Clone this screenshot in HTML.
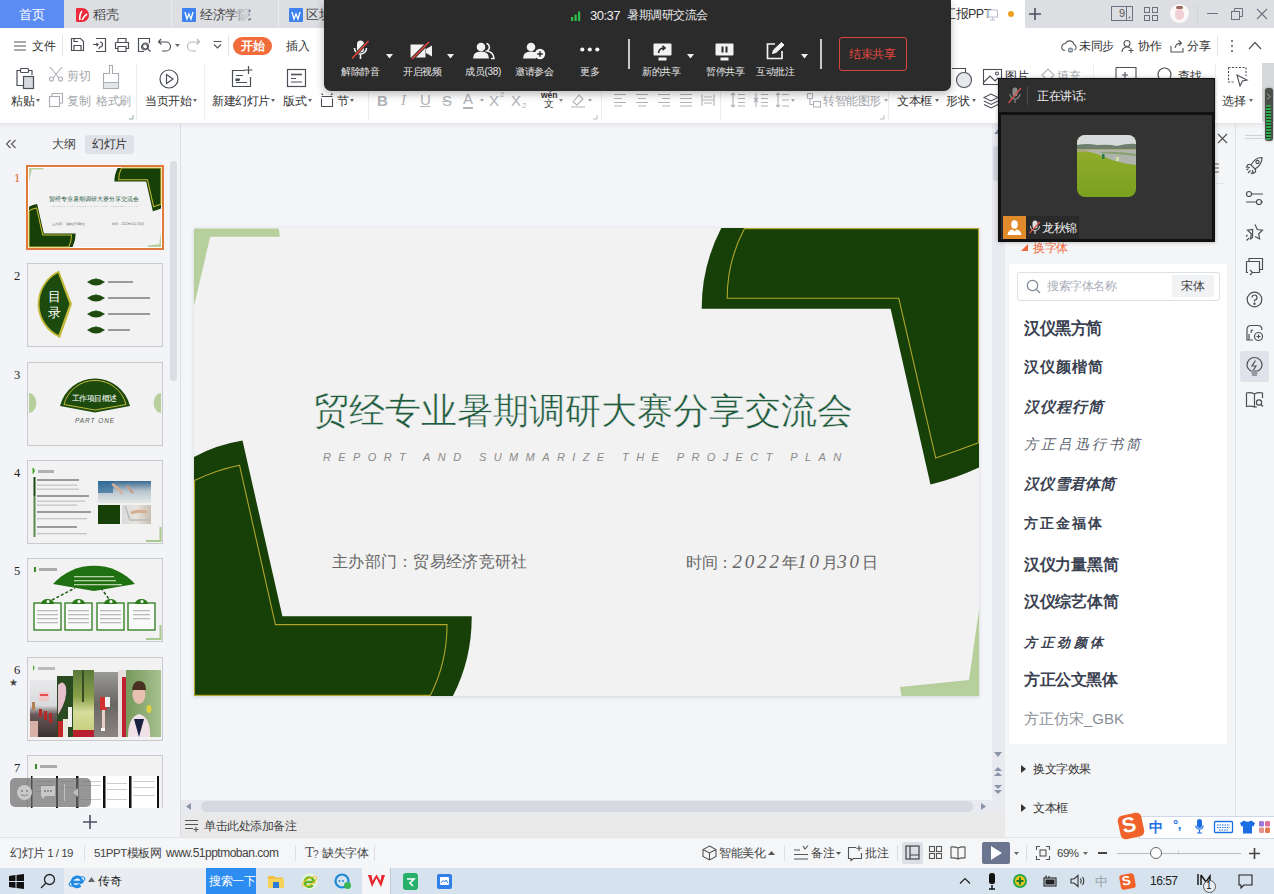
<!DOCTYPE html>
<html><head><meta charset="utf-8">
<style>
*{box-sizing:border-box;margin:0;padding:0}
html,body{width:1274px;height:894px;overflow:hidden;background:#fff;font-family:"Liberation Sans",sans-serif;color:#333}
.a{position:absolute}
.t{position:absolute;white-space:nowrap;font-size:12px;line-height:14px;color:#3a3a3a;letter-spacing:-0.5px}
svg{position:absolute;overflow:visible}
</style></head><body>

<!-- ===== TAB BAR ===== -->
<div class="a" style="left:0;top:0;width:1274px;height:28px;background:#dcdee2"></div>
<div class="a" style="left:0;top:0;width:64px;height:28px;background:#5b8cf4"></div>
<div class="t" style="left:19px;top:7px;font-size:13px;line-height:15px;color:#fff">首页</div>
<div class="a" style="left:171px;top:0;width:1px;height:28px;background:#e9eaed"></div>
<div class="a" style="left:278px;top:0;width:1px;height:28px;background:#e9eaed"></div>
<!-- daoke icon -->
<div class="a" style="left:76px;top:8px;width:13px;height:14px;background:#ee2b3b;border-radius:1px 7px 7px 1px"></div>
<svg style="left:76px;top:8px" width="13" height="14"><path d="M4,12 Q3,7 6,3 M6,12 Q8,8 11,6" stroke="#fff" stroke-width="1.6" fill="none"/></svg>
<div class="t" style="left:93px;top:7px;font-size:13px;line-height:15px;color:#444">稻壳</div>
<!-- W icons -->
<div class="a" style="left:182px;top:8px;width:14px;height:14px;background:#3d82ef;border-radius:1px"></div>
<svg style="left:182px;top:8px" width="14" height="14"><path d="M3,4 L5,11 L7,6 L9,11 L11,4" stroke="#fff" stroke-width="1.3" fill="none"/></svg>
<div class="t" style="left:200px;top:7px;font-size:13px;line-height:15px;color:#444">经济学院</div>
<div class="a" style="left:232px;top:0;width:16px;height:28px;background:linear-gradient(90deg,rgba(220,222,226,0),#dcdee2)"></div>
<svg style="left:236px;top:9px" width="14" height="12"><rect x="1" y="1" width="11" height="7" stroke="#c5cad3" fill="none"/><path d="M6.5,8 V11 M4,11 H9" stroke="#c5cad3"/></svg>
<div class="a" style="left:289px;top:8px;width:14px;height:14px;background:#3d82ef;border-radius:1px"></div>
<svg style="left:289px;top:8px" width="14" height="14"><path d="M3,4 L5,11 L7,6 L9,11 L11,4" stroke="#fff" stroke-width="1.3" fill="none"/></svg>
<div class="t" style="left:306px;top:7px;font-size:13px;line-height:15px;color:#444">区块链</div>
<!-- active tab -->
<div class="a" style="left:940px;top:0;width:85px;height:28px;background:#fff"></div>
<div class="t" style="left:943px;top:7px;font-size:12.5px;line-height:15px;color:#333">汇报PPT</div>
<svg style="left:987px;top:9px" width="13" height="12"><rect x="0.5" y="1" width="10" height="7" stroke="#b8c0cc" fill="none"/><path d="M5.5,8 V11 M3,11 H8" stroke="#b8c0cc"/></svg>
<div class="a" style="left:1008px;top:11px;width:6px;height:6px;border-radius:50%;background:#f0a020"></div>
<svg style="left:1028px;top:7px" width="14" height="14"><path d="M7,1 V13 M1,7 H13" stroke="#4a5060" stroke-width="1.6"/></svg>
<!-- right tab bar icons -->
<svg style="left:1111px;top:6px" width="23" height="16"><rect x="0.5" y="0.5" width="21" height="14" stroke="#6b7280" fill="none"/><path d="M15.5,1 V15" stroke="#6b7280"/><circle cx="18.5" cy="11.5" r="0.9" fill="#6b7280"/></svg>
<div class="t" style="left:1119px;top:6px;font-size:11px;color:#555">9</div>
<svg style="left:1144px;top:7px" width="14" height="14"><rect x="0.5" y="0.5" width="5" height="5" stroke="#6b7280" fill="none"/><rect x="8.5" y="0.5" width="5" height="5" stroke="#6b7280" fill="none"/><rect x="0.5" y="8.5" width="5" height="5" stroke="#6b7280" fill="none"/><rect x="8.5" y="8.5" width="5" height="5" stroke="#6b7280" fill="none"/></svg>
<div class="a" style="left:1170px;top:4px;width:19px;height:19px;border-radius:50%;background:#fbf8f8"></div>
<div class="a" style="left:1175px;top:9px;width:9px;height:11px;border-radius:45%;background:#f0d0d4"></div>
<div class="a" style="left:1176px;top:6px;width:7px;height:3px;background:#9a6a5a;border-radius:2px"></div>
<div class="a" style="left:1197px;top:5px;width:1px;height:18px;background:#cfd2d8"></div>
<div class="a" style="left:1207px;top:13px;width:11px;height:1px;background:#6b7280"></div>
<svg style="left:1231px;top:8px" width="12" height="12"><rect x="0.5" y="3.5" width="8" height="8" stroke="#6b7280" fill="none"/><path d="M3.5,3.5 V0.5 H11.5 V8.5 H8.5" stroke="#6b7280" fill="none"/></svg>
<svg style="left:1256px;top:8px" width="12" height="12"><path d="M1,1 L11,11 M11,1 L1,11" stroke="#6b7280" stroke-width="1.1"/></svg>

<!-- ===== MENU ROW ===== -->
<div class="a" style="left:0;top:28px;width:1274px;height:32px;background:#fff"></div>
<svg style="left:14px;top:41px" width="13" height="10"><path d="M0,1 H12 M0,5 H12 M0,9 H12" stroke="#555" stroke-width="1.2"/></svg>
<div class="t" style="left:32px;top:39px;font-size:11.5px;color:#333">文件</div>
<div class="a" style="left:62px;top:35px;width:1px;height:21px;background:#e3e4e8"></div>
<svg style="left:70px;top:37px" width="16" height="16" fill="none" stroke="#4b4f58" stroke-width="1.2"><path d="M1.5,1.5 H10.5 L13.5,4.5 V13.5 H1.5 Z M4,13.5 V8.5 H11 V13.5 M4,1.5 V4.5 H8"/></svg>
<svg style="left:92px;top:37px" width="16" height="16" fill="none" stroke="#4b4f58" stroke-width="1.2"><path d="M4,1.5 H13.5 V14.5 H4 M1,7.5 H6 M4.5,6 L6,7.5 L4.5,9 M8,5 A2.5,2.5 0 1 1 8,10 L6.5,12"/></svg>
<svg style="left:114px;top:37px" width="16" height="16" fill="none" stroke="#4b4f58" stroke-width="1.2"><path d="M4,5 V1.5 H12 V5 M1.5,5.5 H14.5 V11.5 H12 M4,11.5 H1.5 V5.5 M4,9.5 H12 V14.5 H4 Z"/></svg>
<svg style="left:137px;top:37px" width="16" height="16" fill="none" stroke="#4b4f58" stroke-width="1.2"><path d="M12.5,6 V1.5 H1.5 V14.5 H7 M7.5,7 A3,3 0 1 0 7.6,7 M10.5,11.5 L13.5,14.5"/><circle cx="8.5" cy="9" r="3"/></svg>
<svg style="left:157px;top:37px" width="16" height="16" fill="none" stroke="#4b4f58" stroke-width="1.2"><path d="M4,2 L1.5,5 L4.5,7.5 M1.5,5 H9 A4.5,4.5 0 0 1 9,14 H5"/></svg>
<svg style="left:175px;top:44px" width="6" height="4"><path d="M0,0 H5 L2.5,3 Z" fill="#666"/></svg>
<svg style="left:186px;top:37px" width="16" height="16" fill="none" stroke="#b4b7bd" stroke-width="1.2"><path d="M11,2 L13.5,5 L10.5,7.5 M13.5,5 H6 A4.5,4.5 0 0 0 6,14 H10"/></svg>
<svg style="left:213px;top:41px" width="9" height="9" fill="none" stroke="#555" stroke-width="1.1"><path d="M0.5,0.5 H8.5 M1,3.5 L4.5,7 L8,3.5"/></svg>
<div class="a" style="left:228px;top:35px;width:1px;height:21px;background:#e3e4e8"></div>
<div class="a" style="left:233px;top:37px;width:39px;height:18px;border-radius:9px;background:#f26b3a"></div>
<div class="t" style="left:241px;top:39px;font-size:12px;color:#fff;font-weight:bold;letter-spacing:-0.3px">开始</div>
<div class="t" style="left:286px;top:39px;font-size:11.5px;color:#333">插入</div>
<!-- menu row right -->
<svg style="left:1061px;top:39px" width="16" height="14" fill="none" stroke="#555" stroke-width="1.1"><path d="M4,11.5 A3.5,3.5 0 0 1 4.5,4.5 A4.5,4.5 0 0 1 13,5.5 A3,3 0 0 1 13.5,11"/><circle cx="9.5" cy="11" r="2.6" fill="#7c8592" stroke="none"/><path d="M8.2,11 H10.8" stroke="#fff"/></svg>
<div class="t" style="left:1079px;top:39px;font-size:11.5px;color:#333">未同步</div>
<svg style="left:1121px;top:39px" width="14" height="14" fill="none" stroke="#555" stroke-width="1.1"><circle cx="6" cy="4.5" r="3"/><path d="M1,13 A5,5 0 0 1 9,9 M10,9 V14 M7.5,11.5 H12.5"/></svg>
<div class="t" style="left:1138px;top:39px;font-size:11.5px;color:#333">协作</div>
<svg style="left:1170px;top:39px" width="14" height="14" fill="none" stroke="#555" stroke-width="1.1"><path d="M1,7 V13 H13 V9 M5,9 Q6,4 11,4 M8.5,1.5 L11.5,4 L9,6.5"/></svg>
<div class="t" style="left:1187px;top:39px;font-size:11.5px;color:#333">分享</div>
<div class="a" style="left:1217px;top:36px;width:1px;height:20px;background:#e3e4e8"></div>
<svg style="left:1230px;top:39px" width="4" height="14"><circle cx="2" cy="2" r="1" fill="#555"/><circle cx="2" cy="7" r="1" fill="#555"/><circle cx="2" cy="12" r="1" fill="#555"/></svg>
<svg style="left:1248px;top:41px" width="14" height="9" fill="none" stroke="#555" stroke-width="1.2"><path d="M1,8 L7,1.5 L13,8"/></svg>

<!-- ===== RIBBON ===== -->
<div class="a" style="left:0;top:60px;width:1274px;height:64px;background:#fff;border-bottom:1px solid #e3e4e8"></div>
<!-- ribbon content -->
<svg style="left:15px;top:66px" width="22" height="24" fill="none" stroke="#4b4f58" stroke-width="1.2"><path d="M5,4.5 H2 V19.5 H8 M14,4.5 H17 V9"/><rect x="5.5" y="2.5" width="8" height="4" rx="1"/><rect x="8.5" y="10.5" width="10" height="12" fill="#d6d9de" stroke="#4b4f58"/></svg>
<div class="t" style="left:11px;top:94px;font-size:11.5px;color:#333">粘贴</div>
<svg style="left:36px;top:99px" width="5" height="3"><path d="M0,0 H4 L2,3 Z" fill="#666"/></svg>
<svg style="left:48px;top:66px" width="16" height="16" fill="none" stroke="#a9adb3" stroke-width="1.1"><path d="M2,1 L11,12 M14,1 L5,12"/><circle cx="3.5" cy="13" r="2"/><circle cx="12.5" cy="13" r="2"/></svg>
<div class="t" style="left:67px;top:69px;font-size:11.5px;color:#a3a6ab">剪切</div>
<svg style="left:48px;top:92px" width="16" height="16" fill="none" stroke="#a9adb3" stroke-width="1.1"><path d="M4,4 V1.5 H14.5 V11 H12"/><rect x="1.5" y="4.5" width="10" height="10"/></svg>
<div class="t" style="left:67px;top:94px;font-size:11.5px;color:#a3a6ab">复制</div>
<svg style="left:102px;top:64px" width="18" height="26" fill="none" stroke="#a9adb3" stroke-width="1.1"><path d="M7.5,1.5 H10.5 V9.5 H16.5 V24.5 H1.5 V9.5 H7.5 Z M1.5,18.5 H16.5"/><rect x="2" y="19" width="14" height="5" fill="#e3e5e8" stroke="none"/></svg>
<div class="t" style="left:96px;top:94px;font-size:11.5px;color:#a3a6ab">格式刷</div>
<svg style="left:129px;top:115px" width="5" height="5"><path d="M4,0 V4 H0" stroke="#9aa" fill="none"/></svg>
<div class="a" style="left:136px;top:64px;width:1px;height:56px;background:#eceef1"></div>
<svg style="left:159px;top:69px" width="20" height="20" fill="none" stroke="#4b4f58" stroke-width="1.2"><circle cx="10" cy="10" r="9"/><path d="M7.5,5.5 L14,10 L7.5,14.5 Z"/></svg>
<div class="t" style="left:145px;top:94px;font-size:11.5px;color:#333">当页开始</div>
<svg style="left:193px;top:99px" width="5" height="3"><path d="M0,0 H4 L2,3 Z" fill="#666"/></svg>
<div class="a" style="left:204px;top:64px;width:1px;height:56px;background:#eceef1"></div>
<svg style="left:231px;top:65px" width="24" height="24" fill="none" stroke="#4b4f58" stroke-width="1.2"><path d="M14,5.5 H1.5 V21.5 H19.5 V12 M17.5,1 V9 M13.5,5 H21.5 M5,10.5 H12 M5,14.5 H9 M5,17.5 H16"/><rect x="5" y="14" width="3" height="1.5" fill="#4b4f58"/></svg>
<div class="t" style="left:212px;top:94px;font-size:11.5px;color:#333">新建幻灯片</div>
<svg style="left:271px;top:99px" width="5" height="3"><path d="M0,0 H4 L2,3 Z" fill="#666"/></svg>
<svg style="left:286px;top:68px" width="21" height="20" fill="none" stroke="#4b4f58" stroke-width="1.2"><rect x="1.5" y="1.5" width="18" height="17"/><path d="M5,6.5 H16 M5,10.5 H10 M5,14 H16"/><rect x="5" y="5" width="11" height="3" fill="#4b4f58" opacity=".3" stroke="none"/></svg>
<div class="t" style="left:283px;top:94px;font-size:11.5px;color:#333">版式</div>
<svg style="left:308px;top:99px" width="5" height="3"><path d="M0,0 H4 L2,3 Z" fill="#666"/></svg>
<svg style="left:320px;top:93px" width="14" height="14" fill="none" stroke="#4b4f58" stroke-width="1.1"><path d="M1.5,3.5 H12.5 M1.5,0.5 L3,2 M12.5,0.5 L11,2 M1.5,5.5 V13.5 H12.5 V5.5"/></svg>
<div class="t" style="left:337px;top:94px;font-size:11.5px;color:#333">节</div>
<svg style="left:350px;top:99px" width="5" height="3"><path d="M0,0 H4 L2,3 Z" fill="#666"/></svg>
<div class="a" style="left:368px;top:64px;width:1px;height:56px;background:#eceef1"></div>
<!-- font formatting row (greyed) -->
<div class="t" style="left:377px;top:92px;font-size:15px;line-height:17px;color:#b0b3b8;font-weight:bold">B</div>
<div class="t" style="left:401px;top:92px;font-size:15px;line-height:17px;color:#b0b3b8;font-style:italic;font-family:'Liberation Serif',serif">I</div>
<div class="t" style="left:420px;top:91px;font-size:15px;line-height:17px;color:#b0b3b8;text-decoration:underline">U</div>
<div class="t" style="left:442px;top:92px;font-size:15px;line-height:17px;color:#b0b3b8;text-decoration:line-through">S</div>
<div class="t" style="left:463px;top:90px;font-size:15px;line-height:17px;color:#b0b3b8;border-bottom:2px solid #b0b3b8">A</div>
<svg style="left:480px;top:99px" width="5" height="3"><path d="M0,0 H4 L2,3 Z" fill="#aaa"/></svg>
<div class="t" style="left:489px;top:92px;font-size:15px;line-height:17px;color:#b0b3b8">X</div><div class="t" style="left:500px;top:90px;font-size:8px;line-height:9px;color:#b0b3b8">2</div>
<div class="t" style="left:511px;top:92px;font-size:15px;line-height:17px;color:#b0b3b8">X</div><div class="t" style="left:522px;top:101px;font-size:8px;line-height:9px;color:#b0b3b8">2</div>
<div class="t" style="left:541px;top:91px;font-size:8.5px;line-height:9px;color:#333;letter-spacing:0;font-weight:bold">wén</div>
<div class="t" style="left:544px;top:99px;font-size:10px;line-height:10px;color:#333;letter-spacing:0">文</div>
<svg style="left:559px;top:99px" width="5" height="3"><path d="M0,0 H4 L2,3 Z" fill="#888"/></svg>
<svg style="left:570px;top:92px" width="16" height="16" fill="none" stroke="#b0b3b8" stroke-width="1.1"><path d="M3,10 L9,3 L13,7 L7,13 Z M1,15 H15"/></svg>
<svg style="left:588px;top:99px" width="5" height="3"><path d="M0,0 H4 L2,3 Z" fill="#aaa"/></svg>
<svg style="left:593px;top:115px" width="5" height="5"><path d="M4,0 V4 H0" stroke="#bbb" fill="none"/></svg>
<div class="a" style="left:601px;top:64px;width:1px;height:56px;background:#eceef1"></div>
<svg style="left:613px;top:93px" width="110" height="14" fill="none" stroke="#b0b3b8" stroke-width="1.1">
<path d="M1,1.5 H13 M1,5.5 H9 M1,9.5 H13 M1,13 H9"/>
<path d="M23,1.5 H35 M25,5.5 H33 M23,9.5 H35 M25,13 H33"/>
<path d="M45,1.5 H57 M49,5.5 H57 M45,9.5 H57 M49,13 H57"/>
<path d="M67,1.5 H79 M67,5.5 H79 M67,9.5 H79 M67,13 H79"/>
<path d="M89,1.5 V13 M101,1.5 V13 M89,7 H101 M91,4 H99 M91,10 H99"/></svg>
<div class="a" style="left:720px;top:64px;width:1px;height:56px;background:#eceef1"></div>
<svg style="left:730px;top:92px" width="60" height="16" fill="none" stroke="#b0b3b8" stroke-width="1.1">
<path d="M3,1 V15 M1,3 L3,1 L5,3 M1,13 L3,15 L5,13 M8,2.5 H15 M8,6.5 H15 M8,10.5 H15 M8,14 H15"/>
<path d="M26,1 V15 M24,6 L26,8 L28,6 M24,10 L26,8 L28,10 M31,2.5 H38 M31,6.5 H38 M31,10.5 H38 M31,14 H38"/>
<path d="M48,1 V15 M46,3 L48,1 L50,3 M46,13 L48,15 L50,13 M52,2.5 H59 M52,8 H59 M52,14 H59"/></svg>
<svg style="left:791px;top:99px" width="5" height="3"><path d="M0,0 H4 L2,3 Z" fill="#aaa"/></svg>
<svg style="left:806px;top:92px" width="16" height="16" fill="none" stroke="#b0b3b8" stroke-width="1.1"><path d="M1.5,1.5 H6.5 V6.5 H1.5 Z M4,6.5 V12.5 H7 M7.5,9.5 H14.5 V15 H7.5 Z"/></svg>
<div class="t" style="left:823px;top:94px;font-size:11.5px;color:#a3a6ab">转智能图形</div>
<svg style="left:884px;top:99px" width="5" height="3"><path d="M0,0 H4 L2,3 Z" fill="#aaa"/></svg>
<svg style="left:880px;top:115px" width="5" height="5"><path d="M4,0 V4 H0" stroke="#bbb" fill="none"/></svg>
<div class="a" style="left:888px;top:64px;width:1px;height:56px;background:#eceef1"></div>
<div class="t" style="left:897px;top:94px;font-size:11.5px;color:#333">文本框</div>
<svg style="left:935px;top:99px" width="5" height="3"><path d="M0,0 H4 L2,3 Z" fill="#666"/></svg>
<div class="t" style="left:946px;top:94px;font-size:11.5px;color:#333">形状</div>
<svg style="left:972px;top:99px" width="5" height="3"><path d="M0,0 H4 L2,3 Z" fill="#666"/></svg>
<svg style="left:951px;top:67px" width="28" height="22" fill="none" stroke="#4b4f58" stroke-width="1.1"><path d="M1,1.5 H14.5 V8"/><circle cx="13" cy="13" r="7.5" fill="#e6e8eb"/></svg>
<svg style="left:983px;top:93px" width="16" height="16" fill="none" stroke="#4b4f58" stroke-width="1.1"><path d="M8,1 L15,4.5 L8,8 L1,4.5 Z M1,8 L8,11.5 L15,8 M1,11.5 L8,15 L15,11.5"/></svg>
<svg style="left:983px;top:69px" width="19" height="17" fill="none" stroke="#4b4f58" stroke-width="1.1"><rect x="0.5" y="0.5" width="18" height="15"/><path d="M1,13 L7,7 L12,12 L15,9 L18,12"/><circle cx="14" cy="4.5" r="1.5"/></svg>
<div class="t" style="left:1005px;top:69px;font-size:11.5px;color:#333">图片</div>
<div class="t" style="left:1057px;top:69px;font-size:11.5px;color:#a3a6ab">填充</div>
<svg style="left:1040px;top:68px" width="16" height="16" fill="none" stroke="#b0b3b8" stroke-width="1.1"><path d="M2,7 L8,1 L14,7 L8,13 Z"/></svg>
<div class="a" style="left:1093px;top:64px;width:1px;height:56px;background:#eceef1"></div>
<svg style="left:1115px;top:66px" width="22" height="20" fill="none" stroke="#4b4f58" stroke-width="1.1"><path d="M1,1.5 H21 V12 M1,1.5 V12"/><path d="M10,6 V12 M7,9 H13"/></svg>
<svg style="left:1157px;top:67px" width="18" height="18" fill="none" stroke="#4b4f58" stroke-width="1.2"><circle cx="7.5" cy="7.5" r="6.5"/><path d="M12,12 L17,17"/></svg>
<div class="t" style="left:1178px;top:69px;font-size:11.5px;color:#333">查找</div>
<div class="a" style="left:1215px;top:64px;width:1px;height:56px;background:#eceef1"></div>
<svg style="left:1227px;top:66px" width="22" height="22" fill="none" stroke="#4b4f58" stroke-width="1.1"><path d="M1.5,1.5 H19 V10 M1.5,1.5 V16 H8" stroke-dasharray="2 1.5"/><path d="M10,9 L20,14 L15.5,15 L13,20 Z" fill="#fff"/></svg>
<div class="t" style="left:1222px;top:94px;font-size:11.5px;color:#333">选择</div>
<svg style="left:1249px;top:99px" width="5" height="3"><path d="M0,0 H4 L2,3 Z" fill="#666"/></svg>

<!-- ===== LEFT PANEL ===== -->
<div class="a" style="left:0;top:124px;width:181px;height:713px;background:#f3f4f7;border-right:1px solid #dcdde2"></div>
<svg style="left:5px;top:139px" width="12" height="10" fill="none" stroke="#555" stroke-width="1.1"><path d="M5.5,1 L1.5,5 L5.5,9 M10.5,1 L6.5,5 L10.5,9"/></svg>
<div class="t" style="left:52px;top:137px;font-size:12px;color:#444">大纲</div>
<div class="a" style="left:85px;top:135px;width:49px;height:19px;border-radius:3px;background:#dfe2e8"></div>
<div class="t" style="left:92px;top:137px;font-size:12px;color:#333">幻灯片</div>
<div class="a" style="left:170px;top:161px;width:7px;height:220px;border-radius:3px;background:#dcdee3"></div>
<!-- numbers -->
<div class="t" style="left:14px;top:171px;font-size:12.5px;color:#e06a2a;font-family:'Liberation Serif',serif">1</div>
<div class="t" style="left:14px;top:269px;font-size:12.5px;color:#222;font-family:'Liberation Serif',serif">2</div>
<div class="t" style="left:14px;top:368px;font-size:12.5px;color:#222;font-family:'Liberation Serif',serif">3</div>
<div class="t" style="left:14px;top:466px;font-size:12.5px;color:#222;font-family:'Liberation Serif',serif">4</div>
<div class="t" style="left:14px;top:564px;font-size:12.5px;color:#222;font-family:'Liberation Serif',serif">5</div>
<div class="t" style="left:14px;top:663px;font-size:12.5px;color:#222;font-family:'Liberation Serif',serif">6</div>
<div class="t" style="left:9px;top:676px;font-size:10px;color:#444">★</div>
<div class="t" style="left:14px;top:761px;font-size:12.5px;color:#222;font-family:'Liberation Serif',serif">7</div>
<!-- thumb 1 -->
<div class="a" style="left:26px;top:165px;width:138px;height:85px;border:2px solid #e07a3a;background:#fff"></div>
<svg style="left:29px;top:168px" width="132" height="79" viewBox="0 0 785 468" preserveAspectRatio="none">
 <rect width="785" height="468" fill="#f2f2f2"/>
 <path d="M0,0.4 L84.7,0.4 L85.9,8.8 L16.2,8.8 L0,78.1 Z" fill="#b6cf9c"/>
 <path d="M785,381.4 L775,451.9 L706,459 L707.5,468 L785,468 Z" fill="#b6cf9c"/>
 <path d="M527.3,0 A174,174 0 0 0 507.7,80.7 L696.6,80.7 L736.5,256.6 Q762,250 785,239.4 L785,0 Z" fill="#173f08"/>
 <path d="M550.5,0.6 A148,148 0 0 0 533.2,70.3 L704.8,70.3 L741.7,230 Q763,223 784.5,214.8 L784.5,0.6 Z" fill="none" stroke="#c8bb30" stroke-width="6"/>
 <path d="M0,229 Q22,217 48.5,212.6 L88.4,388.2 L277.7,388.2 A173,173 0 0 1 258.9,468 L0,468 Z" fill="#173f08"/>
 <path d="M0.5,252.5 Q22,242 45.5,237.2 L81.4,396.6 L253,396.6 A155,155 0 0 1 236.3,467.4 L0.5,467.4 Z" fill="none" stroke="#c8bb30" stroke-width="6"/>
 <text x="120" y="197" font-size="36" fill="#1f5b3d" font-family="Liberation Serif" textLength="537">贸经专业暑期调研大赛分享交流会</text>
 <text x="129" y="232" font-size="11" fill="#8a8a8a" textLength="517" font-style="italic">REPORT AND SUMMARIZE THE PROJECT PLAN</text>
 <text x="138" y="340" font-size="16" fill="#666" textLength="195">主办部门：贸易经济竞研社</text>
 <text x="492" y="340" font-size="16" fill="#666" textLength="192">时间：2022年10月30日</text>
</svg>
<!-- thumb 2 -->
<div class="a" style="left:27px;top:263px;width:136px;height:84px;border:1.5px solid #c9cacd;background:#f2f2f2"></div>
<svg style="left:27px;top:263px" width="136" height="84">
 <path d="M32,7.5 A37,37 0 0 0 33,75 L45,41 Z" fill="#c2b83a"/>
 <path d="M31,10 A35,35 0 0 0 31.5,72 L42.5,41 Z" fill="#1d4b0e"/>
 <text x="21" y="38" font-size="13" fill="#fff" font-family="Liberation Serif">目</text><text x="21" y="54" font-size="13" fill="#fff" font-family="Liberation Serif">录</text>
 <g fill="#1d4b0e"><path d="M60,19 Q69,12 78,19 Q69,26 60,19Z"/><path d="M60,35 Q69,28 78,35 Q69,42 60,35Z"/><path d="M60,51 Q69,44 78,51 Q69,58 60,51Z"/><path d="M60,67 Q69,60 78,67 Q69,74 60,67Z"/></g>
 <g fill="#999"><rect x="81" y="18" width="25" height="2"/><rect x="81" y="34" width="42" height="2"/><rect x="81" y="50" width="42" height="2"/><rect x="81" y="66" width="22" height="2"/></g>
</svg>
<!-- thumb 3 -->
<div class="a" style="left:27px;top:362px;width:136px;height:84px;border:1.5px solid #c9cacd;background:#f2f2f2"></div>
<svg style="left:27px;top:362px" width="136" height="84">
 <path d="M33,44 A36,36 0 0 1 103,44 L68,50.5 Z" fill="#1d4b0e"/>
 <path d="M37,42.5 A32,32 0 0 1 99,42.5 L68,48 Z" fill="none" stroke="#c2b83a" stroke-width="1"/>
 <text x="45" y="39" font-size="7.6" fill="#fff" textLength="45">工作项目概述</text>
 <text x="48" y="61" font-size="6.5" fill="#555" letter-spacing="0.8" font-style="italic" textLength="40">PART ONE</text>
 <path d="M2,31 A7,9.5 0 0 1 2,51 Z" fill="#b6cf9c"/>
 <path d="M134,31 A7,9.5 0 0 0 134,51 Z" fill="#b6cf9c"/>
</svg>
<!-- thumb 4 -->
<div class="a" style="left:27px;top:460px;width:136px;height:84px;border:1.5px solid #c9cacd;background:#f2f2f2"></div>
<svg style="left:27px;top:460px" width="136" height="84">
 <defs><linearGradient id="ph4" x1="0" y1="0" x2="0" y2="1"><stop offset="0" stop-color="#3a6a90"/><stop offset=".45" stop-color="#b8c4cc"/><stop offset="1" stop-color="#e4e8ea"/></linearGradient>
 <linearGradient id="ph4b" x1="0" y1="0" x2="1" y2="0"><stop offset="0" stop-color="#d8dcdc"/><stop offset=".5" stop-color="#e8e2dc"/><stop offset="1" stop-color="#c8c0b0"/></linearGradient></defs>
 <path d="M6,8 Q9,10.5 6,13.5 Z" fill="#4aa82a" stroke="#4aa82a"/><rect x="11" y="10" width="16" height="3" fill="#b0b0b0"/>
 <rect x="6.5" y="17" width="2" height="19" fill="#1f4a10"/><rect x="6.5" y="36" width="2" height="41" fill="#5a8a4a"/>
 <g fill="#9a9a9a"><rect x="10" y="19" width="42" height="2"/><rect x="10" y="35" width="52" height="2"/><rect x="10" y="51" width="54" height="2"/><rect x="10" y="66" width="40" height="2"/></g>
 <g fill="#c4c4c4"><rect x="10" y="24.5" width="40" height="1.3"/><rect x="10" y="28.5" width="42" height="1.3"/><rect x="10" y="40.5" width="48" height="1.3"/><rect x="10" y="44.5" width="40" height="1.3"/><rect x="10" y="58" width="50" height="1.3"/><rect x="10" y="73" width="50" height="1.3"/></g>
 <rect x="71" y="21" width="53" height="22" fill="url(#ph4)"/>
 <path d="M71,21 H86 V33 H71 Z" fill="#2a6a9a" opacity=".7"/><path d="M85,24 Q92,28 95,34" stroke="#d8b09a" stroke-width="2.5" fill="none"/><path d="M100,26 L106,33" stroke="#c89a8a" stroke-width="2.5"/>
 <rect x="71" y="45" width="22" height="19" fill="#173f08"/>
 <rect x="95" y="45" width="29" height="19" fill="url(#ph4b)"/><path d="M98,46 L103,60 H124" stroke="#b8bcbc" fill="none" stroke-width="1.5"/><path d="M104,53 Q110,50 120,52" stroke="#d4ac90" stroke-width="3" fill="none"/>
 <path d="M133.5,67 V81 H119" stroke="#a8c890" stroke-width="2" fill="none"/>
</svg>
<!-- thumb 5 -->
<div class="a" style="left:27px;top:558px;width:136px;height:84px;border:1.5px solid #c9cacd;background:#f2f2f2"></div>
<svg style="left:27px;top:558px" width="136" height="84">
 <rect x="7" y="9" width="2" height="5" fill="#3a8a2a"/><rect x="12" y="10" width="18" height="3" fill="#aaa"/>
 <path d="M26,26 A55,55 0 0 1 108,26 L67,33 Z" fill="#1f7010"/>
 <g fill="#b8d0a8"><rect x="47" y="18" width="40" height="1.3"/><rect x="47" y="22" width="42" height="1.3"/><rect x="47" y="26" width="48" height="1.3"/></g>
 <path d="M25,42 L48,30 M74,30 L82,41" stroke="#1f5a10" stroke-width="1.5" stroke-dasharray="3 2"/>
 <g fill="#fafafa" stroke="#2a7a18" stroke-width="1.3"><rect x="7" y="45" width="27" height="27"/><rect x="38" y="45" width="27" height="27"/><rect x="70" y="45" width="27" height="27"/><rect x="101" y="45" width="27" height="27"/></g>
 <g fill="#2a7a18"><path d="M14,46 A6.5,5 0 0 1 27,46 Z"/><path d="M45,46 A6.5,5 0 0 1 58,46 Z"/><path d="M77,46 A6.5,5 0 0 1 90,46 Z"/><path d="M108,46 A6.5,5 0 0 1 121,46 Z"/></g>
 <g fill="#fff"><circle cx="21" cy="43.5" r="1.5"/><circle cx="52" cy="43.5" r="1.5"/><circle cx="84" cy="43.5" r="1.5"/><circle cx="115" cy="43.5" r="1.5"/></g>
 <g fill="#bbb"><rect x="10" y="52" width="21" height="1.3"/><rect x="10" y="56" width="21" height="1.3"/><rect x="10" y="60" width="21" height="1.3"/><rect x="10" y="64" width="21" height="1.3"/>
 <rect x="41" y="52" width="21" height="1.3"/><rect x="41" y="56" width="21" height="1.3"/><rect x="41" y="60" width="21" height="1.3"/><rect x="41" y="64" width="21" height="1.3"/>
 <rect x="73" y="52" width="21" height="1.3"/><rect x="73" y="56" width="21" height="1.3"/><rect x="73" y="60" width="21" height="1.3"/><rect x="73" y="64" width="21" height="1.3"/>
 <rect x="106" y="52" width="17" height="1.3"/><rect x="106" y="56" width="17" height="1.3"/><rect x="106" y="60" width="17" height="1.3"/></g>
 <path d="M133.5,67 V81 H119" stroke="#a8c890" stroke-width="2" fill="none"/>
</svg>
<!-- thumb 6 -->
<div class="a" style="left:27px;top:657px;width:136px;height:84px;border:1.5px solid #c9cacd;background:#f2f2f2"></div>
<svg style="left:27px;top:657px" width="136" height="84">
 <defs>
  <linearGradient id="p1" x1="0" y1="0" x2="0" y2="1"><stop offset="0" stop-color="#e8e8ea"/><stop offset=".45" stop-color="#d8dadd"/><stop offset=".6" stop-color="#6a5a5a"/><stop offset="1" stop-color="#3a3030"/></linearGradient>
  <linearGradient id="p3" x1="0" y1="0" x2="0" y2="1"><stop offset="0" stop-color="#5a7a3a"/><stop offset=".45" stop-color="#8aa04a"/><stop offset=".7" stop-color="#d6dc9a"/><stop offset="1" stop-color="#c8d080"/></linearGradient>
  <linearGradient id="p4" x1="0" y1="0" x2="0" y2="1"><stop offset="0" stop-color="#9a9a98"/><stop offset=".5" stop-color="#6a6662"/><stop offset="1" stop-color="#8a8580"/></linearGradient>
  <linearGradient id="p5" x1="0" y1="0" x2="1" y2="0"><stop offset="0" stop-color="#6a9050"/><stop offset=".5" stop-color="#88a870"/><stop offset="1" stop-color="#a8c090"/></linearGradient>
 </defs>
 <path d="M6,8 Q9,10 6,14 Z" fill="#4aa82a"/><rect x="11" y="10" width="17" height="3" fill="#bbb"/>
 <rect x="3" y="23" width="27" height="57" fill="url(#p1)"/>
 <rect x="12" y="35" width="10" height="9" fill="#f0c8c8"/><rect x="13" y="37" width="8" height="2" fill="#e05050"/>
 <rect x="5" y="45" width="3" height="8" fill="#b08050"/>
 <g fill="#b02828"><rect x="12" y="52" width="3" height="8"/><rect x="17" y="54" width="3" height="9"/><rect x="22" y="56" width="3" height="10"/></g>
 <rect x="3" y="64" width="8" height="16" fill="#d8b0a8"/>
 <rect x="30" y="19" width="16" height="61" fill="#2a4a22"/>
 <path d="M31,28 Q36,22 39,30 Q41,42 31,58 Z" fill="#e6c0cc"/>
 <rect x="31" y="64" width="6" height="16" fill="#c02828"/><rect x="36" y="62" width="5" height="18" fill="#e8e8e0"/>
 <rect x="41" y="50" width="4" height="20" fill="#f0f0f0"/>
 <rect x="46" y="13" width="21" height="60" fill="url(#p3)"/>
 <path d="M56,13 V45" stroke="#3a4a22" stroke-width="2"/>
 <rect x="46" y="73" width="21" height="7" fill="#b82030"/>
 <rect x="67" y="15" width="24" height="65" fill="url(#p4)"/>
 <rect x="73" y="40" width="7" height="13" fill="#d03030"/><rect x="78" y="40" width="5" height="10" fill="#f0f0f0"/><rect x="75" y="53" width="3" height="18" fill="#e8d0c8"/><rect x="74" y="71" width="4" height="3" fill="#fff"/>
 <rect x="91" y="13" width="43" height="67" fill="url(#p5)"/>
 <rect x="91" y="13" width="8" height="67" fill="#e8e0e0"/><rect x="95" y="20" width="4" height="60" fill="#c02030"/>
 <ellipse cx="112" cy="38" rx="6.5" ry="9" fill="#e8c0b0"/><path d="M105,33 Q106,24 112,24 Q119,24 119,33" fill="#4a3020"/>
 <path d="M101,80 Q101,60 112,57 Q124,60 123,80 Z" fill="#f0e0e8"/><path d="M107,62 L112,80 L117,62 Z" fill="#1a2040"/>
 <ellipse cx="122" cy="52" rx="2.5" ry="4" fill="#e0d040"/>
</svg>
<!-- thumb 7 -->
<div class="a" style="left:27px;top:755px;width:136px;height:53px;border:1.5px solid #c9cacd;border-bottom:none;background:#f2f2f2;overflow:hidden"></div>
<svg style="left:27px;top:755px" width="136" height="52">
 <rect x="8" y="9" width="2" height="5" fill="#3a8a2a"/><rect x="13" y="10" width="17" height="3" fill="#aaa"/>
 <rect x="4" y="21" width="128" height="32" fill="#fff"/>
 <g fill="#111"><rect x="4" y="21" width="1.5" height="32"/><rect x="29" y="21" width="2" height="32"/><rect x="49" y="21" width="2.5" height="32"/><rect x="76" y="21" width="2.5" height="32"/><rect x="102" y="21" width="2.5" height="32"/><rect x="130" y="21" width="2" height="32"/></g>
 <g fill="#ccc"><rect x="8" y="26" width="18" height="1"/><rect x="8" y="30" width="18" height="1"/><rect x="8" y="36" width="18" height="1"/><rect x="34" y="26" width="13" height="1"/><rect x="34" y="32" width="13" height="1"/><rect x="54" y="26" width="20" height="1"/><rect x="54" y="30" width="20" height="1"/><rect x="80" y="28" width="20" height="1"/><rect x="80" y="34" width="20" height="1"/><rect x="106" y="26" width="22" height="1"/><rect x="106" y="32" width="22" height="1"/><rect x="106" y="40" width="22" height="1"/><rect x="80" y="44" width="20" height="1"/><rect x="54" y="44" width="20" height="1"/></g>
</svg>
<div class="a" style="left:10px;top:778px;width:81px;height:29px;border-radius:5px;background:rgba(110,110,110,.72)"></div>
<svg style="left:16px;top:784px" width="17" height="17"><circle cx="8.5" cy="8.5" r="7.5" fill="#c8c8c8"/><circle cx="6" cy="7" r="1" fill="#888"/><circle cx="11" cy="7" r="1" fill="#888"/><path d="M5,10.5 Q8.5,13.5 12,10.5" stroke="#888" fill="none"/></svg>
<svg style="left:40px;top:785px" width="16" height="15"><path d="M1,1 H15 V11 H6 L2,14 V11 H1 Z" fill="#c8c8c8"/><circle cx="5" cy="6" r="0.9" fill="#777"/><circle cx="8" cy="6" r="0.9" fill="#777"/><circle cx="11" cy="6" r="0.9" fill="#777"/></svg>
<div class="a" style="left:64px;top:784px;width:1px;height:17px;background:#c0c0c0"></div>
<svg style="left:73px;top:788px" width="6" height="9"><path d="M5,0 L0,4.5 L5,9 Z" fill="#c0c0c0"/></svg>
<svg style="left:82px;top:814px" width="16" height="16"><path d="M8,1 V15 M1,8 H15" stroke="#4a5060" stroke-width="1.6"/></svg>


<!-- ===== MAIN AREA ===== -->
<div class="a" style="left:181px;top:124px;width:824px;height:691px;background:#f4f5f8"></div>

<!-- slide -->
<div class="a" style="left:194px;top:228px;width:785px;height:468px;background:#f2f2f2;box-shadow:0 1px 4px rgba(0,0,0,.14)"></div>
<svg style="left:194px;top:228px" width="785" height="468" viewBox="0 0 785 468">
 <path d="M0,0.4 L84.7,0.4 L85.9,8.8 L16.2,8.8 L0,78.1 Z" fill="#b6cf9c"/>
 <path d="M785,381.4 L775,451.9 L706,459 L707.5,468 L785,468 Z" fill="#b6cf9c"/>
 <path d="M527.3,0 A174,174 0 0 0 507.7,80.7 L696.6,80.7 L736.5,256.6 Q762,250 785,239.4 L785,0 Z" fill="#173f08"/>
 <path d="M550.5,0.6 A148,148 0 0 0 533.2,70.3 L704.8,70.3 L741.7,230 Q763,223 784.5,214.8 L784.5,0.6 Z" fill="none" stroke="#b0a62a" stroke-width="1.1"/>
 <path d="M0,229 Q22,217 48.5,212.6 L88.4,388.2 L277.7,388.2 A173,173 0 0 1 258.9,468 L0,468 Z" fill="#173f08"/>
 <path d="M0.5,252.5 Q22,242 45.5,237.2 L81.4,396.6 L253,396.6 A155,155 0 0 1 236.3,467.4 L0.5,467.4 Z" fill="none" stroke="#b0a62a" stroke-width="1.1"/>
</svg>
<div class="t" style="left:313px;top:389px;font-family:'Liberation Serif',serif;font-size:36px;line-height:44px;color:#1f5b3d;letter-spacing:0px;-webkit-text-stroke:0.45px #f2f2f2">贸经专业暑期调研大赛分享交流会</div>
<div class="t" style="left:323px;top:450px;font-size:11px;line-height:14px;color:#8a8a8a;font-style:italic;letter-spacing:7.4px">REPORT AND SUMMARIZE THE PROJECT PLAN</div>
<div class="t" style="left:332px;top:552px;font-family:'Liberation Serif',serif;font-size:16px;line-height:20px;color:#666;letter-spacing:0.3px">主办部门：贸易经济竞研社</div>
<div class="t" style="left:686px;top:552px;font-family:'Liberation Serif',serif;font-size:16px;line-height:20px;color:#666">时间：<i style="font-size:19px;letter-spacing:2.8px">2022</i>年<i style="font-size:19px;letter-spacing:2.8px">10</i>月<i style="font-size:19px;letter-spacing:2.8px">30</i>日</div>

<!-- scrollbars -->
<div class="a" style="left:992px;top:124px;width:13px;height:690px;background:#e9eaef"></div>
<svg style="left:994px;top:129px" width="8" height="6"><path d="M0,5 L4,0 L8,5 Z" fill="#8a93a8"/></svg>
<div class="a" style="left:993px;top:146px;width:6px;height:35px;border-radius:3px;background:#d3d6dd"></div>
<svg style="left:994px;top:752px" width="8" height="6"><path d="M0,0 H8 L4,5 Z" fill="#8a93a8"/></svg>
<svg style="left:994px;top:767px" width="8" height="9"><path d="M0,4 L4,0 L8,4 Z M0,9 L4,5 L8,9 Z" fill="#8a93a8"/></svg>
<svg style="left:994px;top:785px" width="8" height="9"><path d="M0,0 H8 L4,4 Z M0,5 H8 L4,9 Z" fill="#8a93a8"/></svg>
<div class="a" style="left:181px;top:800px;width:811px;height:14px;background:#e9eaef"></div>
<svg style="left:186px;top:803px" width="5" height="7"><path d="M5,0 V7 L0,3.5 Z" fill="#8a93a8"/></svg>
<div class="a" style="left:201px;top:801px;width:772px;height:11px;border-radius:6px;background:#d6d9e0"></div>
<svg style="left:981px;top:803px" width="5" height="7"><path d="M0,0 V7 L5,3.5 Z" fill="#8a93a8"/></svg>
<!-- notes -->
<div class="a" style="left:181px;top:814px;width:824px;height:23px;background:#e9e9ea"></div>
<svg style="left:185px;top:819px" width="15" height="13" fill="none" stroke="#555" stroke-width="1.1"><path d="M0,1.5 H13 M0,5.5 H13 M0,9.5 H8 M11,8 V13 M8.5,10.5 H13.5"/></svg>
<div class="t" style="left:204px;top:819px;font-size:12px;color:#444">单击此处添加备注</div>

<!-- ===== RIGHT PANE ===== -->
<div class="a" style="left:1005px;top:124px;width:230px;height:713px;background:#f4f5f7"></div>
<svg style="left:1217px;top:133px" width="11" height="11"><path d="M1,1 L10,10 M10,1 L1,10" stroke="#555" stroke-width="1.2"/></svg>
<svg style="left:1211px;top:163px" width="8" height="10"><path d="M0,1 H8 M0,5 H8 M0,9 H8" stroke="#666" stroke-width="1.1"/></svg>
<div class="a" style="left:1005px;top:183px;width:220px;height:1px;background:#e3e4e8"></div>
<svg style="left:1021px;top:244px" width="7" height="7"><path d="M0,7 H7 V0 Z" fill="#f0683a"/></svg>
<div class="t" style="left:1033px;top:241px;font-size:12px;color:#f0683a">换字体</div>
<div class="a" style="left:1009px;top:264px;width:218px;height:480px;background:#fff"></div>
<div class="a" style="left:1017px;top:272px;width:203px;height:29px;border:1px solid #dcdfe4;border-radius:3px;background:#fff"></div>
<svg style="left:1026px;top:279px" width="15" height="15" fill="none" stroke="#7a8494" stroke-width="1.2"><circle cx="6.5" cy="6.5" r="5.2"/><path d="M10.3,10.3 L14,14"/></svg>
<div class="t" style="left:1047px;top:279px;font-size:12px;color:#a9aeb8">搜索字体名称</div>
<div class="a" style="left:1172px;top:275px;width:42px;height:22px;border-radius:2px;background:#f1f2f4"></div>
<div class="t" style="left:1181px;top:279px;font-size:12px;color:#444">宋体</div>
<!-- font list -->
<div class="t" style="left:1024px;top:319px;font-size:16px;line-height:20px;color:#3a4150;font-weight:bold;letter-spacing:-0.5px;transform:scaleY(1.05)">汉仪黑方简</div>
<div class="t" style="left:1024px;top:357px;font-size:15px;line-height:20px;color:#3a4150;font-weight:bold;letter-spacing:1px;font-family:'Liberation Serif',serif">汉仪颜楷简</div>
<div class="t" style="left:1024px;top:397px;font-size:15px;line-height:20px;color:#3a4150;font-weight:bold;letter-spacing:1px;font-style:italic;font-family:'Liberation Serif',serif">汉仪程行简</div>
<div class="t" style="left:1024px;top:435px;font-size:14px;line-height:20px;color:#59606e;letter-spacing:3px;font-style:italic;font-family:'Liberation Serif',serif">方正吕迅行书简</div>
<div class="t" style="left:1024px;top:474px;font-size:15px;line-height:20px;color:#3a4150;font-weight:bold;letter-spacing:0.3px;font-style:italic;font-family:'Liberation Serif',serif">汉仪雪君体简</div>
<div class="t" style="left:1024px;top:514px;font-size:14px;line-height:20px;color:#3a4150;font-weight:bold;letter-spacing:2px;font-family:'Liberation Serif',serif">方正金福体</div>
<div class="t" style="left:1024px;top:555px;font-size:16px;line-height:20px;color:#3a4150;font-weight:bold;letter-spacing:-0.3px">汉仪力量黑简</div>
<div class="t" style="left:1024px;top:592px;font-size:16px;line-height:20px;color:#3a4150;font-weight:bold;letter-spacing:-0.3px">汉仪综艺体简</div>
<div class="t" style="left:1024px;top:633px;font-size:13px;line-height:20px;color:#3a4150;font-weight:bold;letter-spacing:3.5px;font-style:italic;font-family:'Liberation Serif',serif">方正劲颜体</div>
<div class="t" style="left:1024px;top:670px;font-size:16px;line-height:20px;color:#3a4150;font-weight:bold">方正公文黑体</div>
<div class="t" style="left:1024px;top:709px;font-size:15px;line-height:20px;color:#8a8f98;letter-spacing:0px">方正仿宋_GBK</div>
<svg style="left:1021px;top:765px" width="5" height="8"><path d="M0,0 V8 L5,4 Z" fill="#333"/></svg>
<div class="t" style="left:1033px;top:762px;font-size:11.5px;color:#333">换文字效果</div>
<svg style="left:1021px;top:804px" width="5" height="8"><path d="M0,0 V8 L5,4 Z" fill="#333"/></svg>
<div class="t" style="left:1033px;top:801px;font-size:11.5px;color:#333">文本框</div>
<!-- right icon sidebar -->
<div class="a" style="left:1235px;top:124px;width:39px;height:713px;background:#f4f5f7;border-left:1px solid #e1e2e6"></div>
<div class="a" style="left:1245px;top:135px;width:18px;height:1px;background:#d0d3d9"></div>
<div class="a" style="left:1245px;top:138px;width:18px;height:1px;background:#d0d3d9"></div>
<div class="a" style="left:1240px;top:351px;width:29px;height:31px;border-radius:3px;background:#dfe2e8"></div>
<svg style="left:1245px;top:156px" width="19" height="19" fill="none" stroke="#4b4f58" stroke-width="1.2"><path d="M17,1.5 Q10,1.5 6,9 L10,13 Q17,9 17,1.5 Z M6.5,8.5 L3,8.5 L1.5,11 L5,11.5 M10.5,12.5 V16 L8,17.5 L7.5,14 M3,17 L5.5,14.5 M1.5,14 L3.5,12.5 M6,18 L7,16.5"/><circle cx="12.5" cy="6" r="1.6"/></svg>
<svg style="left:1245px;top:190px" width="19" height="17" fill="none" stroke="#4b4f58" stroke-width="1.2"><path d="M7,4 H18 M1,12 H12 M16,12 H18"/><circle cx="4" cy="4" r="2.5"/><circle cx="14" cy="12" r="2.5"/></svg>
<svg style="left:1245px;top:223px" width="19" height="19" fill="none" stroke="#4b4f58" stroke-width="1.2"><path d="M10,1.5 L12.3,6.5 L17.5,7.2 L13.7,10.8 L14.6,16 L10,13.5 M7.5,14.5 L5.4,16 L6.3,10.8 L2.5,7.2 L7.7,6.5 Z M1.5,17.5 L4,15 M1,13.5 L2.5,12"/></svg>
<svg style="left:1245px;top:257px" width="19" height="18" fill="none" stroke="#4b4f58" stroke-width="1.2"><path d="M4,4.5 V1.5 H17.5 V12.5 H15 M1.5,4.5 H14.5 V15.5 H7 M1.5,4.5 V15.5 H3 M5,13 L7.5,15.5 L5,18"/></svg>
<svg style="left:1246px;top:291px" width="17" height="17" fill="none" stroke="#4b4f58" stroke-width="1.2"><circle cx="8.5" cy="8.5" r="7.3"/><path d="M6,6.5 A2.5,2.5 0 1 1 8.5,9 V10.5"/><circle cx="8.5" cy="12.8" r="0.6" fill="#4b4f58"/></svg>
<svg style="left:1245px;top:324px" width="19" height="18" fill="none" stroke="#4b4f58" stroke-width="1.2"><path d="M2,6 Q2,1.5 6,1.5 H13 Q17,1.5 17,6 M2,6 V16 H8 M4,16 V10 M6.5,9 Q5,6 8,6"/><circle cx="13.5" cy="12.5" r="4"/><path d="M11.5,12.5 H15.5 M13.5,10.5 V14.5"/></svg>
<svg style="left:1245px;top:357px" width="19" height="19" fill="none" stroke="#4b4f58" stroke-width="1.2"><path d="M6.5,16 H12.5 M7,18 H12 M6,14 Q2,11.5 2,8 A7.5,7.5 0 0 1 17,8 Q17,11.5 13,14 Z M10.5,3.5 L7,9 H11 L8.5,13"/></svg>
<svg style="left:1245px;top:391px" width="19" height="17" fill="none" stroke="#4b4f58" stroke-width="1.2"><path d="M9.5,3 Q6,1 1.5,2 V15.5 Q6,14.5 9.5,16 V3 Q13,1 17.5,2 V7 M9.5,16 H12"/><circle cx="14" cy="11.5" r="2.6"/><path d="M16,13.5 L18,15.5"/></svg>

<div class="a" style="left:1262px;top:63px;width:12px;height:59px;background:#d5d7db"></div>
<div class="a" style="box-shadow:0 0 3px rgba(0,0,0,.3);left:1265px;top:88px;width:8px;height:53px;background:#4a4f4a;border-radius:3px"></div>
<div class="a" style="left:1266px;top:105px;width:5px;height:35px;border-radius:2px;background:repeating-linear-gradient(0deg,#2fa84f 0 2px,#1f3b22 2px 3px)"></div>
<svg style="left:1266px;top:93px" width="5" height="7"><path d="M1,0.5 L4,3.5 L1,6.5" stroke="#aaa" fill="none"/></svg>
<div class="a" style="left:0;top:124px;width:1274px;height:5px;background:linear-gradient(rgba(0,0,0,.045),rgba(0,0,0,0))"></div>
<!-- speaker window -->
<div class="a" style="left:998px;top:78px;width:217px;height:164px;background:#111;box-shadow:0 0 4px rgba(0,0,0,.3)"></div>
<div class="a" style="left:999px;top:79px;width:215px;height:33px;background:#2e2e2e"></div>
<svg style="left:1008px;top:87px" width="14" height="17"><rect x="4.5" y="0.5" width="5" height="9" rx="2.5" fill="#8a8a8a"/><path d="M2,7 A5,5 0 0 0 12,7 M7,12 V16" stroke="#8a8a8a" stroke-width="1.2" fill="none"/><path d="M0.5,16 L13,1" stroke="#d9534f" stroke-width="1.3"/></svg>
<div class="a" style="left:1027px;top:86px;width:1px;height:19px;background:#4a4a4a"></div>
<div class="t" style="left:1037px;top:89px;font-size:12px;color:#f2f2f2">正在讲话:</div>
<div class="a" style="left:1001px;top:115px;width:211px;height:124px;background:#333"></div>
<svg style="left:1077px;top:135px" width="59" height="62"><defs><clipPath id="rc"><rect width="59" height="62" rx="8"/></clipPath>
<linearGradient id="gr" x1="0" y1="0" x2="0" y2="1"><stop offset="0" stop-color="#98b030"/><stop offset="1" stop-color="#7aa020"/></linearGradient></defs>
<g clip-path="url(#rc)">
<rect width="59" height="62" fill="url(#gr)"/>
<rect width="59" height="11" fill="#d6dadb"/>
<path d="M0,10 Q10,8 20,10 Q32,9 40,11 Q52,8 59,9 V16 H0 Z" fill="#6e7f6e"/>
<rect y="14" width="59" height="3" fill="#a8a878"/>
<path d="M10,15 H59 V30 Q40,28 28,22 Q18,18 10,16 Z" fill="#b0b4ac"/>
<path d="M24,17 Q40,16 59,19 V21 Q40,19 24,18 Z" fill="#7a9a5a" opacity=".7"/>
<rect x="25" y="19" width="2.5" height="5" fill="#2a7a4a"/><rect x="39" y="22" width="3" height="4" fill="#c8e0a0"/>
</g></svg>
<div class="a" style="left:1002px;top:216px;width:77px;height:23px;background:#2a2a2a"></div>
<div class="a" style="left:1003px;top:216px;width:23px;height:23px;background:#e08a2c"></div>
<svg style="left:1007px;top:219px" width="15" height="17"><ellipse cx="7.5" cy="5.5" rx="3.3" ry="4.3" fill="#fff"/><path d="M0.5,16 Q1,11 5.5,10.5 L7.5,12.5 L9.5,10.5 Q14,11 14.5,16 Z" fill="#fff"/></svg>
<svg style="left:1029px;top:220px" width="12" height="15"><rect x="3.5" y="0.5" width="5" height="8" rx="2.5" fill="#ddd"/><path d="M1.5,6 A4.5,4.5 0 0 0 10.5,6 M6,10.5 V14" stroke="#ddd" stroke-width="1.1" fill="none"/><path d="M0.5,13 L11,2" stroke="#d9534f" stroke-width="1.3"/></svg>
<div class="t" style="left:1042px;top:221px;font-size:12px;color:#f0f0f0">龙秋锦</div>

<!-- ===== STATUS BAR ===== -->
<div class="a" style="left:0;top:837px;width:1274px;height:31px;background:#f5f6f8;border-top:1px solid #e3e4e8"></div>
<div class="t" style="left:10px;top:846px;font-size:11.5px;color:#444">幻灯片 1 / 19</div>
<div class="a" style="left:84px;top:845px;width:1px;height:16px;background:#dcdee2"></div>
<div class="t" style="left:94px;top:846px;font-size:11.5px;color:#444">51PPT模板网</div>
<div class="t" style="left:166px;top:846px;font-size:12px;color:#444">www.51pptmoban.com</div>
<div class="a" style="left:295px;top:845px;width:1px;height:16px;background:#dcdee2"></div>
<div class="t" style="left:305px;top:844px;font-size:15px;line-height:17px;color:#555;font-family:'Liberation Serif',serif">T</div>
<div class="t" style="left:313px;top:848px;font-size:10px;color:#555">?</div>
<div class="t" style="left:322px;top:846px;font-size:11.5px;color:#444">缺失字体</div>
<div class="a" style="left:374px;top:845px;width:1px;height:16px;background:#dcdee2"></div>
<svg style="left:702px;top:845px" width="15" height="16" fill="none" stroke="#555" stroke-width="1.1"><path d="M7.5,1 L14,4.5 V11.5 L7.5,15 L1,11.5 V4.5 Z M1,4.5 L7.5,8 L14,4.5 M7.5,8 V15"/></svg>
<div class="t" style="left:719px;top:846px;font-size:11.5px;color:#444">智能美化</div>
<svg style="left:768px;top:851px" width="7" height="4"><path d="M0,4 H7 L3.5,0 Z" fill="#555"/></svg>
<div class="a" style="left:784px;top:845px;width:1px;height:16px;background:#dcdee2"></div>
<svg style="left:793px;top:845px" width="16" height="15" fill="none" stroke="#555" stroke-width="1.1"><path d="M1,5 H7 M1,9.5 H15 M1,14 H15 M10,1 L12,4 L15,0.5"/></svg>
<div class="t" style="left:811px;top:846px;font-size:11.5px;color:#444">备注</div>
<svg style="left:836px;top:852px" width="5" height="3"><path d="M0,0 H5 L2.5,3 Z" fill="#555"/></svg>
<svg style="left:847px;top:845px" width="16" height="16" fill="none" stroke="#555" stroke-width="1.1"><path d="M9,2.5 H1.5 V13.5 H4 V15.5 L6.5,13.5 H14.5 V8 M12,0.5 V6 M9.2,3.2 H14.8"/></svg>
<div class="t" style="left:865px;top:846px;font-size:11.5px;color:#444">批注</div>
<div class="a" style="left:897px;top:845px;width:1px;height:16px;background:#dcdee2"></div>
<div class="a" style="left:902px;top:842px;width:21px;height:22px;border-radius:2px;background:#dcdfe5"></div>
<svg style="left:905px;top:845px" width="15" height="15" fill="none" stroke="#444" stroke-width="1.2"><rect x="1" y="1" width="13" height="13"/><path d="M5,1 V14 M5,10 H14"/></svg>
<svg style="left:929px;top:846px" width="13" height="13" fill="none" stroke="#555" stroke-width="1.1"><rect x="0.5" y="0.5" width="5" height="5"/><rect x="7.5" y="0.5" width="5" height="5"/><rect x="0.5" y="7.5" width="5" height="5"/><rect x="7.5" y="7.5" width="5" height="5"/></svg>
<svg style="left:950px;top:846px" width="16" height="14" fill="none" stroke="#555" stroke-width="1.1"><path d="M8,2 Q5,0.5 1,1 V12 Q5,11.5 8,13 Q11,11.5 15,12 V1 Q11,0.5 8,2 V13"/></svg>
<div class="a" style="left:982px;top:842px;width:28px;height:22px;border-radius:2px;background:#6b7590"></div>
<svg style="left:991px;top:846px" width="11" height="14"><path d="M0,0 L11,7 L0,14 Z" fill="#fff"/></svg>
<svg style="left:1014px;top:852px" width="5" height="3"><path d="M0,0 H5 L2.5,3 Z" fill="#666"/></svg>
<div class="a" style="left:1026px;top:845px;width:1px;height:16px;background:#dcdee2"></div>
<svg style="left:1036px;top:846px" width="14" height="14" fill="none" stroke="#555" stroke-width="1.1"><path d="M0.5,4 V0.5 H4 M10,0.5 H13.5 V4 M13.5,10 V13.5 H10 M4,13.5 H0.5 V10"/><rect x="4" y="4" width="6" height="6"/></svg>
<div class="t" style="left:1057px;top:846px;font-size:11.5px;color:#444">69%</div>
<svg style="left:1083px;top:852px" width="5" height="3"><path d="M0,0 H5 L2.5,3 Z" fill="#666"/></svg>
<div class="a" style="left:1098px;top:852px;width:9px;height:2px;background:#444"></div>
<div class="a" style="left:1117px;top:853px;width:124px;height:1px;background:#b8bcc4"></div>
<div class="a" style="left:1178px;top:851px;width:1px;height:4px;background:#c8ccd2"></div>
<div class="a" style="left:1150px;top:847px;width:12px;height:12px;border-radius:50%;background:#fff;border:1px solid #666"></div>
<svg style="left:1249px;top:848px" width="11" height="11"><path d="M5.5,0 V11 M0,5.5 H11" stroke="#444" stroke-width="1.6"/></svg>

<!-- IME bar -->
<div class="a" style="left:1139px;top:816px;width:135px;height:23px;background:#fff;border:1px solid #cfd8e6;border-right:none"></div>
<div class="a" style="left:1119px;top:814px;width:24px;height:24px;border-radius:5px;background:#f0622a;transform:rotate(-12deg)"></div>
<div class="t" style="left:1122px;top:813px;font-size:21px;line-height:24px;font-weight:bold;color:#fff;transform:rotate(-12deg)">S</div>
<div class="t" style="left:1149px;top:819px;font-size:14px;line-height:16px;font-weight:bold;color:#1c6fe3">中</div>
<div class="t" style="left:1173px;top:817px;font-size:13px;line-height:16px;font-weight:bold;color:#1c6fe3">°,</div>
<svg style="left:1195px;top:819px" width="9" height="15"><rect x="2" y="0" width="5" height="9" rx="2.5" fill="#1c6fe3"/><path d="M0.8,6.5 A3.7,3.7 0 0 0 8.2,6.5 M4.5,11 V14 M2,14 H7" stroke="#1c6fe3" stroke-width="1.2" fill="none"/></svg>
<svg style="left:1214px;top:821px" width="19" height="12"><rect x="0.5" y="0.5" width="18" height="11" rx="1" fill="none" stroke="#1c6fe3" stroke-width="1.3"/><path d="M3,4 H16 M3,6.5 H16 M5,9 H14" stroke="#1c6fe3" stroke-width="1.2" stroke-dasharray="1.5 1"/></svg>
<svg style="left:1239px;top:820px" width="17" height="14"><path d="M5,0.5 L1,3 L2.5,6.5 L4,6 V13.5 H13 V6 L14.5,6.5 L16,3 L12,0.5 Q8.5,3 5,0.5 Z" fill="#1c6fe3"/></svg>
<svg style="left:1259px;top:821px" width="11" height="12"><rect x="0" y="0" width="5" height="5.5" rx="1.2" fill="#9a7ad8"/><rect x="6" y="0" width="5" height="5.5" rx="1.2" fill="#e0709a"/><rect x="0" y="6.5" width="5" height="5.5" rx="1.2" fill="#e8908a"/><rect x="6" y="6.5" width="5" height="5.5" rx="1.2" fill="#e27a50"/></svg>

<!-- ===== TASKBAR ===== -->
<div class="a" style="left:0;top:868px;width:1274px;height:26px;background:#d6e2ed"></div>
<svg style="left:9px;top:874px" width="15" height="15"><path d="M0,2 L6.5,1 V7 H0 Z M7.5,0.9 L15,0 V7 H7.5 Z M0,8 H6.5 V14 L0,13 Z M7.5,8 H15 V15 L7.5,14.1 Z" fill="#111"/></svg>
<svg style="left:40px;top:873px" width="16" height="16" fill="none" stroke="#222" stroke-width="1.3"><circle cx="9.5" cy="6.5" r="5"/><path d="M6,10 L1,15"/></svg>
<div class="a" style="left:64px;top:868px;width:142px;height:26px;background:#e9edf1"></div>
<svg style="left:68px;top:873px" width="18" height="17"><path d="M4.5,9 H14 A5,5 0 1 0 12.5,12.5" stroke="#1e8ae6" stroke-width="2.6" fill="none"/><ellipse cx="9" cy="8.5" rx="8.5" ry="3.5" transform="rotate(-25 9 8.5)" stroke="#1e8ae6" stroke-width="1.1" fill="none"/></svg>
<svg style="left:88px;top:877px" width="7" height="5"><path d="M0,5 H7 L3.5,0 Z" fill="#666"/></svg>
<div class="t" style="left:98px;top:874px;font-size:12px;color:#222">传奇</div>
<div class="a" style="left:206px;top:868px;width:50px;height:26px;background:#2d8cf0"></div>
<div class="t" style="left:209px;top:874px;font-size:12px;color:#fff">搜索一下</div>
<svg style="left:268px;top:874px" width="16" height="14"><path d="M0,2 H6 L7.5,3.5 H15 V13 H0 Z" fill="#f0c040"/><rect x="0" y="5" width="16" height="9" fill="#f7d25a"/><rect x="5" y="8" width="6" height="6" fill="#2a7ad8"/></svg>
<svg style="left:301px;top:873px" width="17" height="17"><circle cx="8.5" cy="8.5" r="8" fill="#e6f4da"/><path d="M4,9 H13 A4.7,4.7 0 1 0 11.8,12.3" stroke="#5ab52a" stroke-width="2.4" fill="none"/><ellipse cx="8.5" cy="8.5" rx="8" ry="3.2" transform="rotate(-30 8.5 8.5)" stroke="#f0c020" stroke-width="1" fill="none"/></svg>
<svg style="left:334px;top:873px" width="18" height="17"><circle cx="8" cy="8" r="6.5" fill="none" stroke="#1a8ad8" stroke-width="2.2"/><circle cx="13.5" cy="12.5" r="3.5" fill="#3ab55a"/><circle cx="5.5" cy="8" r="1" fill="#1a8ad8"/><circle cx="9" cy="8" r="1" fill="#1a8ad8"/></svg>
<div class="a" style="left:362px;top:868px;width:28px;height:26px;background:#f3f5f7"></div>
<svg style="left:368px;top:874px" width="17" height="14"><path d="M0,1 L4,13 L8.5,4 L13,13 L17,1 L13.5,1 L12.5,7 L8.5,0.5 L4.5,7 L3.5,1 Z" fill="#e8262e"/></svg>
<div class="a" style="left:390px;top:868px;width:1px;height:26px;background:#bfcad6"></div>
<div class="a" style="left:403px;top:873px;width:15px;height:17px;border-radius:3px;background:#26b06a"></div>
<svg style="left:405px;top:876px" width="11" height="11"><path d="M2,3 L9,3 L5,7 L8,10" stroke="#fff" stroke-width="1.6" fill="none"/></svg>
<div class="a" style="left:437px;top:874px;width:15px;height:15px;border-radius:2px;background:#2f7fe6"></div>
<div class="a" style="left:440px;top:877px;width:9px;height:8px;background:#fff;border-radius:1px"></div>
<svg style="left:441px;top:879px" width="7" height="5"><path d="M0,4 L2,1.5 L3.5,3 L5,1 L7,4" stroke="#2f7fe6" stroke-width="1" fill="none"/></svg>
<!-- tray -->
<svg style="left:959px;top:877px" width="12" height="7" fill="none" stroke="#222" stroke-width="1.2"><path d="M1,6.5 L6,1.5 L11,6.5"/></svg>
<svg style="left:987px;top:873px" width="10" height="17"><rect x="2" y="0" width="6" height="11" rx="2.5" fill="#111"/><path d="M5,12 V16 M2,16 H8" stroke="#111" stroke-width="1.4"/></svg>
<div class="a" style="left:1013px;top:874px;width:14px;height:14px;border-radius:50%;background:#f2c51a;border:2px solid #2aa84a"></div>
<svg style="left:1015px;top:876px" width="10" height="10"><path d="M5,1.5 V8.5 M1.5,5 H8.5" stroke="#1a7a2a" stroke-width="2"/></svg>
<svg style="left:1043px;top:875px" width="15" height="12" fill="none" stroke="#222" stroke-width="1.1"><rect x="1" y="3" width="12" height="8"/><rect x="3" y="5" width="8" height="4" fill="#222"/><path d="M3,3 V0.5 M6,3 V1"/></svg>
<svg style="left:1070px;top:874px" width="15" height="14" fill="none" stroke="#333" stroke-width="1.1"><path d="M1,5 H4 L8,1.5 V12.5 L4,9 H1 Z M10.5,4.5 Q12,7 10.5,9.5 M12.5,3 Q15,7 12.5,11"/></svg>
<div class="t" style="left:1095px;top:874px;font-size:13px;line-height:15px;color:#9aa0a8">中</div>
<div class="a" style="left:1120px;top:874px;width:15px;height:15px;border-radius:3px;background:#f0622a;transform:rotate(-10deg)"></div>
<div class="t" style="left:1122px;top:873px;font-size:13px;line-height:16px;font-weight:bold;color:#fff;transform:rotate(-10deg)">S</div>
<div class="t" style="left:1150px;top:874px;font-size:12px;color:#222">16:57</div>
<svg style="left:1197px;top:873px" width="16" height="13"><path d="M1,1 V12 M4,2 V12 M4,2 L9,9 L13,3 V11" stroke="#111" stroke-width="1.4" fill="none"/></svg>
<div class="a" style="left:1203px;top:880px;width:13px;height:13px;border-radius:50%;background:#e8eef4;border:1px solid #555"></div>
<div class="t" style="left:1206px;top:880px;font-size:10px;line-height:12px;color:#111">1</div>
<svg style="left:1238px;top:874px" width="15" height="15" fill="none" stroke="#222" stroke-width="1.1"><path d="M1,1 H14 V11 H6 L3,14 V11 H1 Z"/></svg>

<!-- ===== MEETING BAR ===== -->
<div class="a" style="left:324px;top:0;width:627px;height:91px;background:#2b2b2b;border-radius:0 0 7px 7px;box-shadow:0 3px 9px rgba(0,0,0,.28)"></div>
<svg style="left:571px;top:10px" width="12" height="11"><rect x="0" y="7" width="2.2" height="4" fill="#2fbf4f"/><rect x="3.5" y="4.5" width="2.2" height="6.5" fill="#2fbf4f"/><rect x="7" y="1.5" width="2.2" height="9.5" fill="#2fbf4f"/></svg>
<div class="t" style="left:590px;top:8px;font-size:13px;line-height:15px;color:#f0f0f0">30:37</div>
<div class="t" style="left:627px;top:8px;font-size:12px;line-height:15px;color:#e8e8e8">暑期调研交流会</div>
<!-- mic -->
<svg style="left:351px;top:40px" width="19" height="20" fill="none"><rect x="6" y="0.5" width="7" height="12" rx="3.5" fill="#f2f2f2"/><path d="M3.5,8 A6,6 0 0 0 15.5,8 M9.5,14 V19" stroke="#f2f2f2" stroke-width="1.6"/><path d="M1,18.5 L17.5,1" stroke="#2b2b2b" stroke-width="3.2"/><path d="M1,18.5 L17.5,1" stroke="#e5473d" stroke-width="1.6"/></svg>
<svg style="left:386px;top:54px" width="8" height="5"><path d="M0,0 H7 L3.5,4.5 Z" fill="#eee"/></svg>
<div class="t" style="left:341px;top:65px;font-size:10px;line-height:14px;color:#e6e6e6;letter-spacing:-0.3px">解除静音</div>
<!-- camera -->
<svg style="left:410px;top:41px" width="23" height="19" fill="none"><rect x="0.5" y="3.5" width="15" height="13" fill="#f2f2f2"/><path d="M16,8 L22,4.5 V15.5 L16,12 Z" fill="#f2f2f2"/><path d="M2,18 L19,1" stroke="#2b2b2b" stroke-width="3.2"/><path d="M2,18 L19,1" stroke="#e5473d" stroke-width="1.6"/></svg>
<svg style="left:447px;top:54px" width="8" height="5"><path d="M0,0 H7 L3.5,4.5 Z" fill="#eee"/></svg>
<div class="t" style="left:403px;top:65px;font-size:10px;line-height:14px;color:#e6e6e6;letter-spacing:-0.3px">开启视频</div>
<!-- members -->
<svg style="left:473px;top:42px" width="22" height="17"><circle cx="8" cy="5" r="4.3" fill="#f2f2f2"/><path d="M0,16.5 Q0,9.5 8,9.5 Q16,9.5 16,16.5 Z" fill="#f2f2f2"/><path d="M13.5,1.5 A4,4 0 0 1 14,9 Q20.5,10 21,16.5 H18" stroke="#f2f2f2" stroke-width="1.5" fill="none"/></svg>
<div class="t" style="left:465px;top:65px;font-size:10px;line-height:14px;color:#e6e6e6;letter-spacing:-0.3px">成员(38)</div>
<!-- invite -->
<svg style="left:523px;top:42px" width="23" height="18"><circle cx="8" cy="5" r="4.3" fill="#f2f2f2"/><path d="M0,16.5 Q0,9.5 8,9.5 Q12,9.5 13,11 V16.5 Z" fill="#f2f2f2"/><circle cx="17" cy="12" r="5.2" fill="#f2f2f2"/><path d="M14.2,12 H19.8 M17,9.2 V14.8" stroke="#2b2b2b" stroke-width="1.5"/></svg>
<div class="t" style="left:515px;top:65px;font-size:10px;line-height:14px;color:#e6e6e6;letter-spacing:-0.3px">邀请参会</div>
<!-- more -->
<svg style="left:580px;top:47px" width="20" height="5"><circle cx="2.3" cy="2.5" r="2.1" fill="#f2f2f2"/><circle cx="9.8" cy="2.5" r="2.1" fill="#f2f2f2"/><circle cx="17.3" cy="2.5" r="2.1" fill="#f2f2f2"/></svg>
<div class="t" style="left:580px;top:65px;font-size:10px;line-height:14px;color:#e6e6e6;letter-spacing:-0.3px">更多</div>
<div class="a" style="left:628px;top:39px;width:2px;height:30px;background:#c8c8c8"></div>
<!-- new share -->
<svg style="left:653px;top:43px" width="20" height="18"><rect x="0.5" y="0.5" width="18" height="12" rx="1" fill="#f2f2f2"/><path d="M5.5,10 Q6,5 11,5 M9.5,2.8 L12,5 L9.5,7.2" stroke="#2b2b2b" stroke-width="1.6" fill="none"/><rect x="5.5" y="14.5" width="8" height="3" fill="#f2f2f2"/></svg>
<svg style="left:687px;top:54px" width="8" height="5"><path d="M0,0 H7 L3.5,4.5 Z" fill="#eee"/></svg>
<div class="t" style="left:642px;top:65px;font-size:10px;line-height:14px;color:#e6e6e6;letter-spacing:-0.3px">新的共享</div>
<!-- pause share -->
<svg style="left:715px;top:43px" width="20" height="18"><rect x="0.5" y="0.5" width="18" height="12" rx="1" fill="#f2f2f2"/><rect x="6.5" y="3.5" width="2" height="6" fill="#2b2b2b"/><rect x="10.5" y="3.5" width="2" height="6" fill="#2b2b2b"/><rect x="5.5" y="14.5" width="8" height="3" fill="#f2f2f2"/></svg>
<div class="t" style="left:706px;top:65px;font-size:10px;line-height:14px;color:#e6e6e6;letter-spacing:-0.3px">暂停共享</div>
<!-- annotate -->
<svg style="left:766px;top:42px" width="20" height="18" fill="none" stroke="#f2f2f2" stroke-width="1.7"><path d="M9,2 H1.5 V16.5 H16 V9"/><path d="M6.5,11.5 L7.5,8 L15.5,0.5 L18,3 L10,10.5 Z" fill="#f2f2f2" stroke-width="1"/></svg>
<svg style="left:801px;top:54px" width="8" height="5"><path d="M0,0 H7 L3.5,4.5 Z" fill="#eee"/></svg>
<div class="t" style="left:756px;top:65px;font-size:10px;line-height:14px;color:#e6e6e6;letter-spacing:-0.3px">互动批注</div>
<div class="a" style="left:820px;top:39px;width:2px;height:30px;background:#c8c8c8"></div>
<div class="a" style="left:839px;top:37px;width:68px;height:34px;border:1px solid #d9453c;border-radius:3px"></div>
<div class="t" style="left:849px;top:47px;font-size:12px;line-height:14px;color:#e8473f">结束共享</div>



</body></html>
